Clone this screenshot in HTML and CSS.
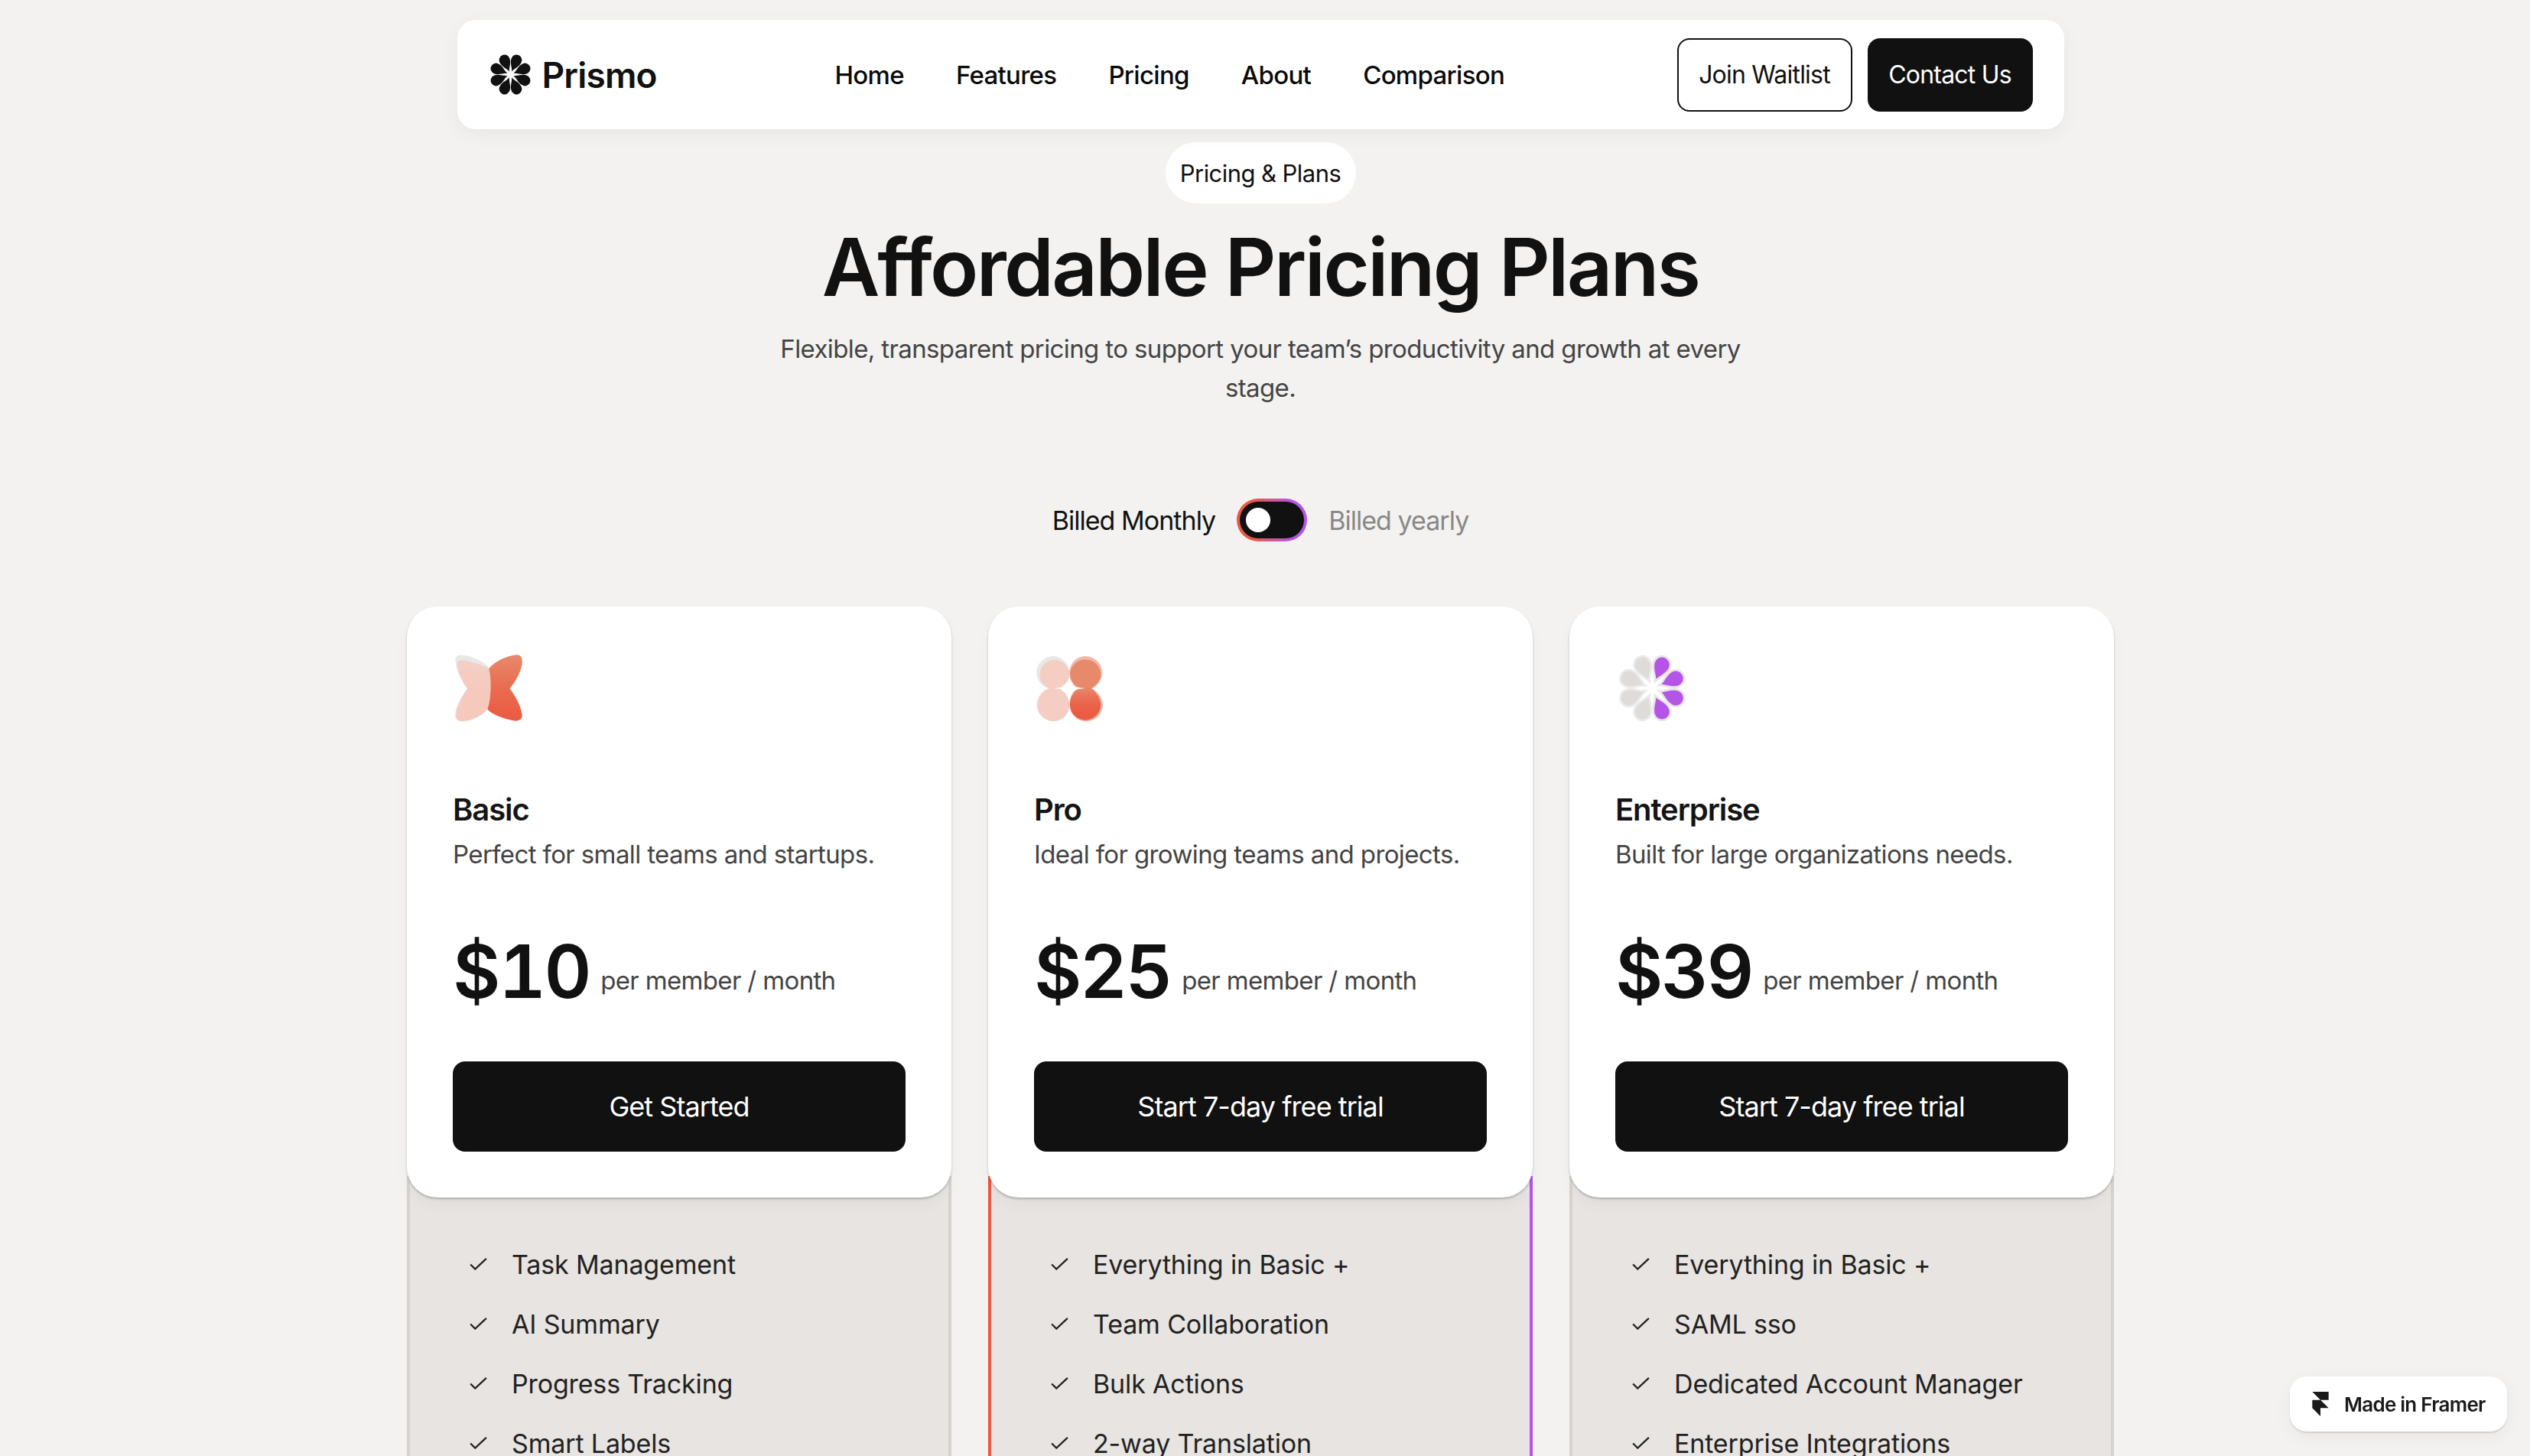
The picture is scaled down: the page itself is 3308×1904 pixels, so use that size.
FILE: index.html
```html
<!DOCTYPE html>
<html lang="en">
<head>
<meta charset="utf-8">
<title>Prismo – Pricing</title>
<link rel="stylesheet" href="styles.css">
</head>
<body>
<svg class="defs" width="0" height="0" aria-hidden="true">
  <defs>
    <path id="petal" d="M0,-30 C-7,-52 -33,-70 -33,-99 A33,33 0 1 1 33,-99 C33,-70 7,-52 0,-30Z"/>
    <path id="logo-petal" d="M0,-20 C-7,-46 -34,-66 -34,-99 A34,34 0 1 1 34,-99 C34,-66 7,-46 0,-20Z"/>
    <linearGradient id="wing" x1="0" y1="0" x2="0" y2="1">
      <stop offset="0" stop-color="#e8896b"/><stop offset=".5" stop-color="#e96c50"/><stop offset="1" stop-color="#ea5a42"/>
    </linearGradient>
    <linearGradient id="pale" x1="0" y1="0" x2="0" y2="1">
      <stop offset="0" stop-color="#f3d0c6"/><stop offset=".5" stop-color="#f6c9bd"/><stop offset="1" stop-color="#f6c9bd"/>
    </linearGradient>
    <linearGradient id="ball" x1="0" y1="0" x2="0" y2="1">
      <stop offset="0" stop-color="#e8896b"/><stop offset=".45" stop-color="#e8896b"/><stop offset=".75" stop-color="#ea6249"/><stop offset="1" stop-color="#ea5a42"/>
    </linearGradient>
  </defs>
</svg>
<div class="page">
  <header class="nav">
    <a class="brand">
      <svg class="brand-mark" viewBox="-133 -133 266 266">
        <use href="#logo-petal" transform="rotate(22.5)"/><use href="#logo-petal" transform="rotate(67.5)"/>
        <use href="#logo-petal" transform="rotate(112.5)"/><use href="#logo-petal" transform="rotate(157.5)"/>
        <use href="#logo-petal" transform="rotate(202.5)"/><use href="#logo-petal" transform="rotate(247.5)"/>
        <use href="#logo-petal" transform="rotate(292.5)"/><use href="#logo-petal" transform="rotate(337.5)"/>
      </svg>
      <span class="brand-name">Prismo</span>
    </a>
    <nav class="nav-links">
      <a>Home</a><a>Features</a><a>Pricing</a><a>About</a><a>Comparison</a>
    </nav>
    <div class="nav-actions">
      <a class="btn-sm btn-outline">Join Waitlist</a>
      <a class="btn-sm btn-dark">Contact Us</a>
    </div>
  </header>

  <section class="hero">
    <span class="pill">Pricing &amp; Plans</span>
    <h1>Affordable Pricing Plans</h1>
    <p>Flexible, transparent pricing to support your team’s productivity and growth at every stage.</p>
  </section>

  <div class="billing">
    <span class="bill-on">Billed Monthly</span>
    <span class="toggle"><span class="knob"></span></span>
    <span class="bill-off">Billed yearly</span>
  </div>

  <section class="plans">
    <article class="plan">
      <div class="plan-card">
        <svg class="plan-icon" viewBox="100 100 280 280">
          <path class="rim" d="M110 128C112 108 135 106 165 116C200 128 225 142 240 160L235 322C210 350 165 372 130 368C110 366 106 348 112 325C120 295 140 265 157 241C135 215 110 170 110 128Z"/>
          <path fill="url(#pale)" d="M118 140C120 128 140 128 165 136C200 148 225 150 240 165C250 190 252 280 235 322C210 350 165 372 130 368C112 364 110 350 115 330C122 300 140 265 157 241C138 215 118 175 118 140Z"/>
          <path fill="url(#wing)" d="M240 165C258 140 310 112 350 110C368 110 372 125 370 145C366 175 345 215 322 241C345 272 366 310 370 345C370 362 355 370 335 366C300 358 255 345 235 322C252 280 250 190 240 165Z"/>
        </svg>
        <h2>Basic</h2>
        <p class="plan-desc">Perfect for small teams and startups.</p>
        <div class="price"><span class="amount">$10</span><span class="per">per member / month</span></div>
        <a class="btn-lg">Get Started</a>
      </div>
      <div class="plan-frame">
        <ul class="features">
          <li><svg class="check" viewBox="0 0 24 17"><path d="M1 9l6.5 6.5L23 1"/></svg>Task Management</li>
          <li><svg class="check" viewBox="0 0 24 17"><path d="M1 9l6.5 6.5L23 1"/></svg>AI Summary</li>
          <li><svg class="check" viewBox="0 0 24 17"><path d="M1 9l6.5 6.5L23 1"/></svg>Progress Tracking</li>
          <li><svg class="check" viewBox="0 0 24 17"><path d="M1 9l6.5 6.5L23 1"/></svg>Smart Labels</li>
        </ul>
      </div>
    </article>

    <article class="plan plan-pro">
      <div class="plan-card">
        <svg class="plan-icon" viewBox="100 100 280 280">
          <path class="rim" d="M175 115A65 65 0 0 1 238 180C238 210 215 232 190 240C215 250 238 275 238 304A64 64 0 0 1 110 304C110 275 130 250 155 240C130 232 110 210 110 180A65 65 0 0 1 175 115Z"/>
          <path fill="#f6cdc2" d="M180 130A58 58 0 0 1 238 186C238 212 218 232 196 240C218 250 238 276 238 306A62 62 0 0 1 114 306C114 276 134 250 160 240C138 232 122 212 122 186A58 58 0 0 1 180 130Z"/>
          <path fill="#f1b9a7" d="M300 115A66 66 0 0 1 366 180C366 210 345 232 325 241C345 252 368 276 368 304A65 65 0 0 1 238 304C238 276 250 252 270 240C250 230 238 206 238 180A63 63 0 0 1 300 115Z"/>
          <path fill="url(#ball)" d="M300 128A60 60 0 0 1 360 186C360 212 340 232 322 241C340 252 360 278 360 304A60 60 0 0 1 240 304C240 276 254 252 274 240C254 230 240 206 240 186A60 60 0 0 1 300 128Z"/>
          <path fill="#fff" d="M240 196C241 225 246 236 302 240C246 244 241 255 238 292C236 255 230 245 174 240C230 236 238 225 240 196Z"/>
        </svg>
        <h2>Pro</h2>
        <p class="plan-desc">Ideal for growing teams and projects.</p>
        <div class="price"><span class="amount">$25</span><span class="per">per member / month</span></div>
        <a class="btn-lg">Start 7-day free trial</a>
      </div>
      <div class="plan-frame">
        <ul class="features">
          <li><svg class="check" viewBox="0 0 24 17"><path d="M1 9l6.5 6.5L23 1"/></svg>Everything in Basic +</li>
          <li><svg class="check" viewBox="0 0 24 17"><path d="M1 9l6.5 6.5L23 1"/></svg>Team Collaboration</li>
          <li><svg class="check" viewBox="0 0 24 17"><path d="M1 9l6.5 6.5L23 1"/></svg>Bulk Actions</li>
          <li><svg class="check" viewBox="0 0 24 17"><path d="M1 9l6.5 6.5L23 1"/></svg>2-way Translation</li>
        </ul>
      </div>
    </article>

    <article class="plan">
      <div class="plan-card">
        <svg class="plan-icon" viewBox="-144 -140 280 280">
          <g class="petal-p"><use href="#petal" transform="rotate(22.5)"/><use href="#petal" transform="rotate(67.5)"/><use href="#petal" transform="rotate(112.5)"/><use href="#petal" transform="rotate(157.5)"/></g>
          <g class="petal-g"><use href="#petal" transform="rotate(202.5)"/><use href="#petal" transform="rotate(247.5)"/><use href="#petal" transform="rotate(292.5)"/><use href="#petal" transform="rotate(337.5)"/></g>
        </svg>
        <h2>Enterprise</h2>
        <p class="plan-desc">Built for large organizations needs.</p>
        <div class="price"><span class="amount">$39</span><span class="per">per member / month</span></div>
        <a class="btn-lg">Start 7-day free trial</a>
      </div>
      <div class="plan-frame">
        <ul class="features">
          <li><svg class="check" viewBox="0 0 24 17"><path d="M1 9l6.5 6.5L23 1"/></svg>Everything in Basic +</li>
          <li><svg class="check" viewBox="0 0 24 17"><path d="M1 9l6.5 6.5L23 1"/></svg>SAML sso</li>
          <li><svg class="check" viewBox="0 0 24 17"><path d="M1 9l6.5 6.5L23 1"/></svg>Dedicated Account Manager</li>
          <li><svg class="check" viewBox="0 0 24 17"><path d="M1 9l6.5 6.5L23 1"/></svg>Enterprise Integrations</li>
        </ul>
      </div>
    </article>
  </section>
</div>
<a class="framer-badge">
  <svg class="framer-mark" viewBox="0 0 14 21"><path d="M0 0H14V7H7ZM0 7H7L14 14H7V21L0 14Z"/></svg>
  <span>Made in Framer</span>
</a>
</body>
</html>
```
FILE: styles.css
```css
* { box-sizing: border-box; }
html, body { margin: 0; height: 1904px; overflow: hidden; }
body {
  background: #f3f2f0;
  color: #111;
  font-family: Inter, "Liberation Sans", sans-serif;
}
.defs { position: absolute; }
ul { list-style: none; margin: 0; padding: 0; }
h1, h2, p { margin: 0; }

.page {
  width: 3296px;
  display: flex;
  flex-direction: column;
  align-items: center;
  padding-top: 26px;
}

/* nav */
.nav {
  width: 2101px;
  height: 143px;
  background: #fff;
  border-radius: 24px;
  box-shadow: 0 6px 24px rgba(0, 0, 0, .05);
  display: flex;
  align-items: center;
  padding: 0 41px 0 42px;
  position: relative;
}
.brand { display: flex; align-items: center; gap: 14px; width: 452px; }
.brand-mark { width: 55px; height: 55px; fill: #111; }
.brand-name { font-size: 46px; font-weight: 600; letter-spacing: -.8px; }
.nav-links { display: flex; gap: 68px; font-size: 33px; font-weight: 500; letter-spacing: -.7px; color: #0a0a0a; }
.nav-actions { margin-left: auto; display: flex; gap: 20px; }
.btn-sm {
  height: 96px;
  border-radius: 16px;
  display: flex;
  align-items: center;
  justify-content: center;
  font-size: 32px;
  font-weight: 400;
  letter-spacing: -.8px;
}
.btn-outline { width: 229px; border: 2px solid #111; color: #111; }
.btn-dark { width: 216px; background: #111; color: #fff; }

/* hero */
.hero { display: flex; flex-direction: column; align-items: center; margin-top: 17px; }
.pill {
  height: 80px;
  width: 249px;
  border-radius: 40px;
  background: #fff;
  display: flex;
  align-items: center;
  justify-content: center;
  font-size: 31px;
  font-weight: 400;
  letter-spacing: -.56px;
}
.hero h1 {
  margin-top: 21px;
  font-size: 104px;
  line-height: 125px;
  font-weight: 600;
  letter-spacing: -2.65px;
}
.hero p {
  margin-top: 19px;
  width: 1300px;
  text-align: center;
  font-size: 33px;
  line-height: 51px;
  letter-spacing: -.62px;
  color: #444;
}

/* billing */
.billing { display: flex; align-items: center; gap: 28px; margin-top: 119px; font-size: 34px; letter-spacing: -.97px; }
.bill-off { color: #888; }
.toggle {
  width: 92px;
  height: 56px;
  border-radius: 28px;
  padding: 4px;
  background: linear-gradient(90deg, #ea5a42 20%, #b455e8 80%);
  display: block;
}
.knob {
  display: block;
  width: 100%;
  height: 100%;
  border-radius: 24px;
  background: #111;
  position: relative;
}
.knob::after {
  content: "";
  position: absolute;
  left: 8px;
  top: 8px;
  width: 32px;
  height: 32px;
  border-radius: 50%;
  background: #fff;
}

/* plans */
.plans { display: flex; gap: 48px; margin-top: 85px; align-items: flex-start; }
.plan { width: 712px; display: flex; flex-direction: column; }
.plan-card {
  position: relative;
  z-index: 1;
  height: 773px;
  background: #fff;
  border-radius: 40px;
  padding: 60px;
  box-shadow: 0 2px 3px rgba(0, 0, 0, .22), 0 10px 20px rgba(0, 0, 0, .03);
  display: flex;
  flex-direction: column;
}
.plan-icon { width: 94px; height: 94px; display: block; flex: none; }
.rim { fill: #e8e8e6; }
.petal-p use { fill: #b455e8; stroke: #e8e6e5; stroke-width: 8; }
.petal-g use { fill: #dedbd9; stroke: #ebeaea; stroke-width: 8; }
.plan-card h2 { margin-top: 87px; font-size: 40px; line-height: 50px; font-weight: 600; letter-spacing: -1.1px; color: #151515; }
.plan-desc { margin-top: 8px; font-size: 33px; line-height: 50px; letter-spacing: -.62px; color: #444; }
.price { display: flex; align-items: flex-start; gap: 14px; margin-top: 64px; height: 128px; }
.amount { font-size: 96px; line-height: 128px; font-weight: 600; font-variant-numeric: tabular-nums; letter-spacing: -2.5px; color: #111; }
.per { margin-top: 56px; font-size: 33px; line-height: 40px; letter-spacing: -.65px; color: #444; }
.btn-lg {
  margin-top: 54px;
  height: 118px;
  border-radius: 16px;
  background: #111;
  color: #fff;
  display: flex;
  align-items: center;
  justify-content: center;
  font-size: 36px;
  font-weight: 400;
  letter-spacing: -.95px;
  flex: none;
}
.plan-frame {
  margin-top: -28px;
  height: 500px;
  padding: 0 4px;
  background: #d6d3cf;
}
.plan-pro .plan-frame { background: linear-gradient(90deg, #ea5a42 0 50%, #b455e8 50% 100%); }
.features { background: #e7e4e1; height: 100%; padding: 76px 0 0 78px; display: flex; flex-direction: column; }
.features li { height: 78px; display: flex; align-items: center; gap: 32px; font-size: 34px; letter-spacing: -.15px; color: #222; }
.check { width: 23px; height: 16px; fill: none; stroke: #222; stroke-width: 2.4; flex: none; }

/* badge */
.framer-badge {
  position: fixed;
  right: 30px;
  bottom: 32px;
  width: 284px;
  height: 72px;
  border-radius: 22px;
  background: #fff;
  box-shadow: 0 2px 2px rgba(0, 0, 0, .12), 0 6px 24px rgba(0, 0, 0, .05);
  display: flex;
  align-items: center;
  gap: 20px;
  padding-left: 29px;
  font-size: 26px;
  font-weight: 600;
  letter-spacing: -.75px;
  color: #1a1a1a;
}
.framer-mark { width: 22px; height: 32px; fill: #1a1a1a; flex: none; }
```
